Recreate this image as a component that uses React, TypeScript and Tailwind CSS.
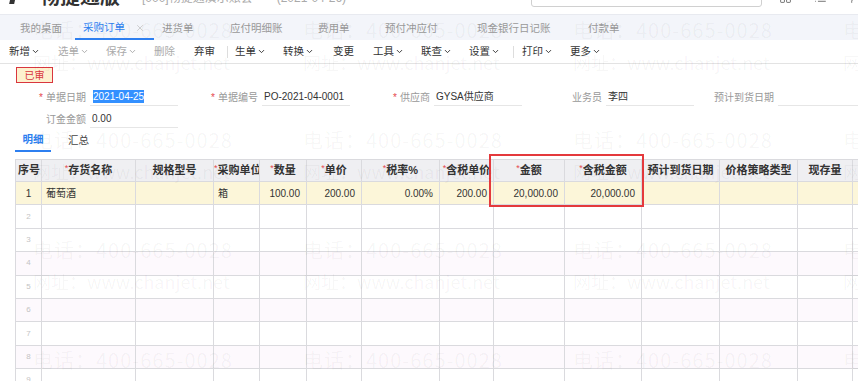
import React from 'react';
import { ChevronDown, X, LayoutGrid, List, User } from 'lucide-react';

const tabs = [
  { label: '我的桌面', w: 'w-[63px]' },
  { label: '采购订单', w: 'w-[79px]', active: true },
  { label: '进货单', w: 'w-[68px]' },
  { label: '应付明细账', w: 'w-[88px]' },
  { label: '费用单', w: 'w-[67px]' },
  { label: '预付冲应付', w: 'w-[92px]' },
  { label: '现金银行日记账', w: 'w-[111px]' },
  { label: '付款单', w: 'w-[60px]' },
];

const tools = [
  { label: '新增', w: 'w-[49px]', arrow: true },
  { label: '选单', w: 'w-[48px]', arrow: true, off: true },
  { label: '保存', w: 'w-[48px]', arrow: true, off: true },
  { label: '删除', w: 'w-[40px]', off: true },
  { label: '弃审', w: 'w-[33px]', sep: 'w-[7px]' },
  { label: '生单', w: 'w-[48px]', arrow: true },
  { label: '转换', w: 'w-[50px]', arrow: true },
  { label: '变更', w: 'w-[40px]' },
  { label: '工具', w: 'w-[48px]', arrow: true },
  { label: '联查', w: 'w-[48px]', arrow: true },
  { label: '设置', w: 'w-[44px]', arrow: true, sep: 'w-[8px]' },
  { label: '打印', w: 'w-[48px]', arrow: true },
  { label: '更多', w: 'w-[48px]', arrow: true },
];

const cols = [
  { label: '序号', w: 'w-[26px]', left: true },
  { label: '存货名称', w: 'w-[94px]', req: true },
  { label: '规格型号', w: 'w-[78px]' },
  { label: '采购单位', w: 'w-[46px]', req: true },
  { label: '数量', w: 'w-[47px]', req: true },
  { label: '单价', w: 'w-[55px]', req: true },
  { label: '税率%', w: 'w-[78px]', req: true },
  { label: '含税单价', w: 'w-[54px]', req: true },
  { label: '金额', w: 'w-[71px]', req: true },
  { label: '含税金额', w: 'w-[77px]', req: true },
  { label: '预计到货日期', w: 'w-[78px]' },
  { label: '价格策略类型', w: 'w-[78px]' },
  { label: '现存量', w: 'w-[55px]' },
  { label: '', w: 'w-[60px]' },
];

const firstRow = ['1', '葡萄酒', '', '箱', '100.00', '200.00', '0.00%', '200.00', '20,000.00', '20,000.00', '', '', '', ''];
const alignOf = (i: number) =>
  i === 0 ? 'text-center' : i === 1 || i === 3 ? 'text-left pl-[4px]' : 'text-right pr-[6px]';

// faint watermark grid over the whole page
const marks: { text: string; x: number; y: number; url?: boolean }[] = [];
[18, 128, 238, 348].forEach((y) => [33, 303, 573, 843].forEach((x) => marks.push({ text: '电话：400-665-0028', x, y })));
[50, 159, 269].forEach((y) =>
  [33, 303, 573, 843].forEach((x) => marks.push({ text: '网址：www.chanjet.net', x, y, url: true }))
);

function Field({ label, value, req, selected }: { label: string; value?: string; req?: boolean; selected?: boolean }) {
  return (
    <div className="flex w-[172px] h-[18px] items-center">
      <div className="w-[84px] pr-[4px] text-right text-[10px] text-[#999] whitespace-nowrap">
        {req && <span className="text-[#e5484d] mr-[3px]">*</span>}
        {label}
      </div>
      <div className="w-[88px] h-[18px] border-b border-[#e6e6e6] flex items-center text-[10px] text-[#333]">
        {value && (
          <span className={selected ? 'ml-[3px] bg-[#3390ff] text-white leading-[13px]' : 'ml-[2px]'}>{value}</span>
        )}
      </div>
    </div>
  );
}

export default function App() {
  return (
    <div className="relative w-[858px] h-[381px] overflow-hidden bg-white font-['Liberation_Sans','Noto_Sans_CJK_SC',sans-serif] text-[#333]">
      {/* top header, cut off by the screenshot */}
      <div className="flex items-end h-[15px] overflow-hidden border-b border-[#e8eaf0]">
        <span className="ml-[10px] mb-[10px] w-[5px] h-[8px] bg-[#333] -skew-x-12 shrink-0" />
        <span className="ml-[25px] mb-[7px] text-[20px] leading-[20px] font-bold text-[#333] whitespace-nowrap">畅捷通版</span>
        <span className="ml-[22px] mb-[9px] text-[12px] leading-[14px] text-[#aaa] whitespace-nowrap">[000]畅捷通演示账套</span>
        <span className="ml-[24px] mb-[9px] text-[12px] leading-[14px] text-[#aaa] whitespace-nowrap">(2021-04-26)</span>
        <div className="ml-[185px] mb-[7px] w-[231px] h-[20px] shrink-0 border border-[#d0d0d0] rounded-[3px] flex items-center justify-end pr-[3px] text-[9px] text-[#444]">▾</div>
        <LayoutGrid className="ml-[17px] mb-[10px] shrink-0 text-[#555]" size={13} strokeWidth={1.5} />
        <List className="ml-[22px] mb-[10px] shrink-0 text-[#555]" size={13} strokeWidth={1.5} />
        <User className="ml-[22px] mb-[10px] shrink-0 text-[#555]" size={13} strokeWidth={1.5} />
        <User className="ml-[12px] mb-[10px] shrink-0 text-[#555]" size={13} strokeWidth={1.5} />
      </div>

      {/* open tabs */}
      <div className="flex h-[25px] bg-[#f3f5fa] pl-[12px]">
        {tabs.map((t) => (
          <div
            key={t.label}
            className={`${t.w} shrink-0 flex items-center pl-[8px] pt-[2px] text-[10.5px] whitespace-nowrap ${
              t.active ? 'border-b-2 border-[#2d7ff0] text-[#2d7ff0]' : 'text-[#999]'
            }`}
          >
            {t.label}
            {t.active && <X className="ml-[10px] text-[#b5b5b5]" size={10} strokeWidth={1.5} />}
          </div>
        ))}
      </div>

      {/* toolbar */}
      <div className="flex items-center h-[24px] pl-[9px] border-b border-[#e3e3e3] text-[10.5px]">
        {tools.map((t) => (
          <React.Fragment key={t.label}>
            <div className={`${t.w} shrink-0 flex items-center whitespace-nowrap ${t.off ? 'text-[#aaa]' : 'text-[#333]'}`}>
              {t.label}
              {t.arrow && <ChevronDown className="ml-[1px]" size={9} strokeWidth={2.5} />}
            </div>
            {t.sep && (
              <>
                <span className="w-px h-[12px] bg-[#dddddd] shrink-0" />
                <span className={`${t.sep} shrink-0`} />
              </>
            )}
          </React.Fragment>
        ))}
      </div>

      {/* status stamp */}
      <div className="ml-[16px] mt-[3px] w-[37px] h-[16px] border-[1.5px] border-[#d9363e] bg-[#fdf1cf] text-[#d9363e] text-[10px] flex items-center justify-center">
        已审
      </div>

      {/* header form */}
      <div className="flex pl-[6px] mt-[5px]">
        <Field label="单据日期" value="2021-04-25" req selected />
        <Field label="单据编号" value="PO-2021-04-0001" req />
        <Field label="供应商" value="GYSA供应商" req />
        <Field label="业务员" value="李四" />
        <Field label="预计到货日期" />
      </div>
      <div className="flex pl-[6px] mt-[4px]">
        <Field label="订金金额" value="0.00" />
      </div>

      {/* detail tabs */}
      <div className="flex ml-[15px] mt-[2px] h-[22px] text-[10.5px]">
        <div className="w-[36px] flex items-center justify-center border-b-2 border-[#2d7ff0] text-[#2d7ff0] font-bold">明细</div>
        <div className="ml-[17px] flex items-center text-[#444]">汇总</div>
      </div>

      {/* detail grid */}
      <div className="ml-[15px] mt-[7px]">
        <table className="table-fixed border-collapse w-[897px]">
          <colgroup>
            {cols.map((c, i) => (
              <col key={i} className={c.w} />
            ))}
          </colgroup>
          <thead>
            <tr className="h-[22px] bg-[#efeff2]">
              {cols.map((c, i) => (
                <th
                  key={i}
                  className={`border border-[#dadade] text-[11px] font-bold text-[#333] whitespace-nowrap overflow-hidden ${
                    c.left ? 'text-left pl-[2px]' : 'text-center'
                  }`}
                >
                  {c.req && <span className="text-[#e5484d] text-[9px] align-top font-normal">*</span>}
                  {c.label}
                </th>
              ))}
            </tr>
          </thead>
          <tbody>
            <tr className="h-[23.4px] bg-[#fcf6d9]">
              {firstRow.map((v, i) => (
                <td key={i} className={`border border-[#dadade] text-[10px] text-[#333] whitespace-nowrap ${alignOf(i)}`}>
                  {v}
                </td>
              ))}
            </tr>
            {[2, 3, 4, 5, 6, 7, 8, 9].map((n) => (
              <tr key={n} className={`h-[23.4px] ${n % 2 === 0 && n > 2 ? 'bg-[#fdf9fd]' : 'bg-white'}`}>
                {cols.map((_, i) => (
                  <td key={i} className="border border-[#dadade] text-[8px] text-[#c4c4c4] text-center">
                    {i === 0 ? n : ''}
                  </td>
                ))}
              </tr>
            ))}
          </tbody>
        </table>
      </div>

      {/* annotation box */}
      <div className="absolute left-[489px] top-[154px] w-[155px] h-[53px] border-2 border-[#e4393c] pointer-events-none" />

      {/* watermark */}
      <div className="absolute inset-0 pointer-events-none">
        {marks.map((m, i) => (
          <span
            key={i}
            className={`absolute leading-[24px] text-black/[0.045] whitespace-nowrap font-['Noto_Sans_CJK_SC',sans-serif] ${
              m.url ? 'text-[18px] tracking-[0px]' : 'text-[20px] tracking-[1px]'
            }`}
            style={{ left: m.x, top: m.y }}
          >
            {m.text}
          </span>
        ))}
      </div>
    </div>
  );
}
